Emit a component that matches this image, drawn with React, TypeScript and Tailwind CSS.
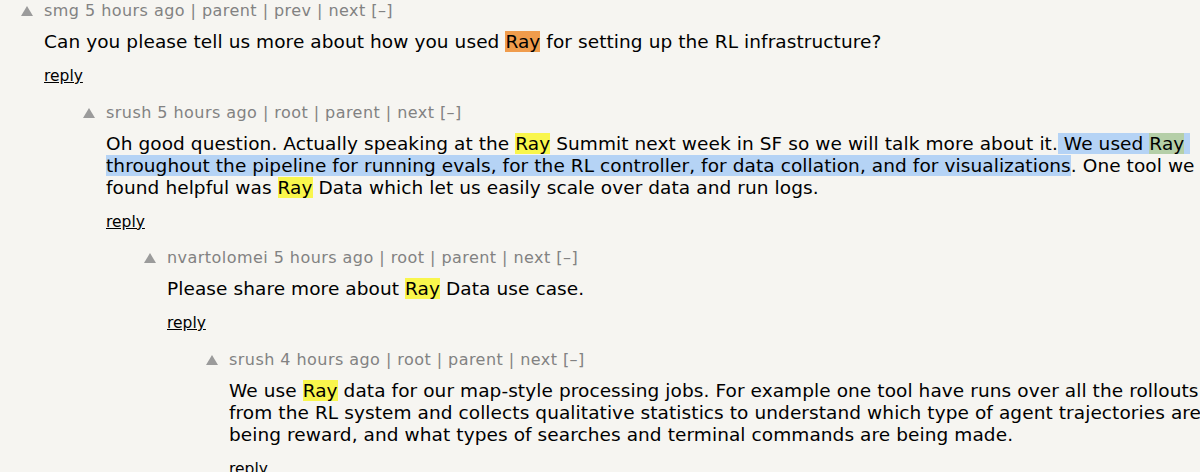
import React from "react";

const Y = ({ children }: { children: React.ReactNode }) => (
  <span className="bg-[#f9f64c]">{children}</span>
);

function Meta({ user, time, links }: { user: string; time: string; links: string[] }) {
  return (
    <div className="h-[22px] leading-[22px] text-[16px] tracking-[0.45px] text-[#828282] whitespace-nowrap">
      {user} {time} | {links.join(" | ")} [–]
    </div>
  );
}

function Comment({
  indent,
  user,
  time,
  links,
  lines,
  last,
}: {
  indent: string;
  user: string;
  time: string;
  links: string[];
  lines: React.ReactNode[];
  last?: boolean;
}) {
  return (
    <div className={`flex ${indent} ${last ? "" : "mb-[14.5px]"}`}>
      <div className="w-[23px] shrink-0 pt-[6px]">
        <div className="w-0 h-0 border-l-[6px] border-r-[6px] border-b-[10px] border-l-transparent border-r-transparent border-b-[#9b9b9b]" />
      </div>
      <div className="flex flex-col">
        <Meta user={user} time={time} links={links} />
        <div className="mt-[9px] text-[18.5px] tracking-[0.08px] leading-[22px] text-black">
          {lines.map((l, i) => (
            <div key={i} className="whitespace-pre">
              {l}
            </div>
          ))}
        </div>
        <div className="mt-[12px] h-[22px] leading-[22px] text-[15.5px] text-black underline">reply</div>
      </div>
    </div>
  );
}

export default function App() {
  return (
    <div
      className="w-[1200px] h-[472px] overflow-hidden bg-[#f6f5f1]"
      style={{ fontFamily: '"DejaVu Sans", Verdana, sans-serif' }}
    >
      <Comment
        indent="pl-[21px]"
        user="smg"
        time="5 hours ago"
        links={["parent", "prev", "next"]}
        lines={[
          <>
            Can you please tell us more about how you used <span className="bg-[#f09c4c]">Ray</span> for setting
            up the RL infrastructure?
          </>,
        ]}
      />
      <Comment
        indent="pl-[83px]"
        user="srush"
        time="5 hours ago"
        links={["root", "parent", "next"]}
        lines={[
          <>
            Oh good question. Actually speaking at the <Y>Ray</Y> Summit next week in SF so we will talk more about
            it.<span className="bg-[#b5d3f5]"> We used </span>
            <span className="bg-[#b5cfa8]">Ray</span>
            <span className="bg-[#b5d3f5]"> </span>
          </>,
          <>
            <span className="bg-[#b5d3f5]">
              throughout the pipeline for running evals, for the RL controller, for data collation, and for
              visualizations
            </span>
            . One tool we
          </>,
          <>
            found helpful was <Y>Ray</Y> Data which let us easily scale over data and run logs.
          </>,
        ]}
      />
      <Comment
        indent="pl-[144px]"
        user="nvartolomei"
        time="5 hours ago"
        links={["root", "parent", "next"]}
        lines={[
          <>
            Please share more about <Y>Ray</Y> Data use case.
          </>,
        ]}
      />
      <Comment
        indent="pl-[206px]"
        user="srush"
        time="4 hours ago"
        links={["root", "parent", "next"]}
        last
        lines={[
          <>
            We use <Y>Ray</Y> data for our map-style processing jobs. For example one tool have runs over all the
            rollouts
          </>,
          <>from the RL system and collects qualitative statistics to understand which type of agent trajectories are</>,
          <>being reward, and what types of searches and terminal commands are being made.</>,
        ]}
      />
    </div>
  );
}
